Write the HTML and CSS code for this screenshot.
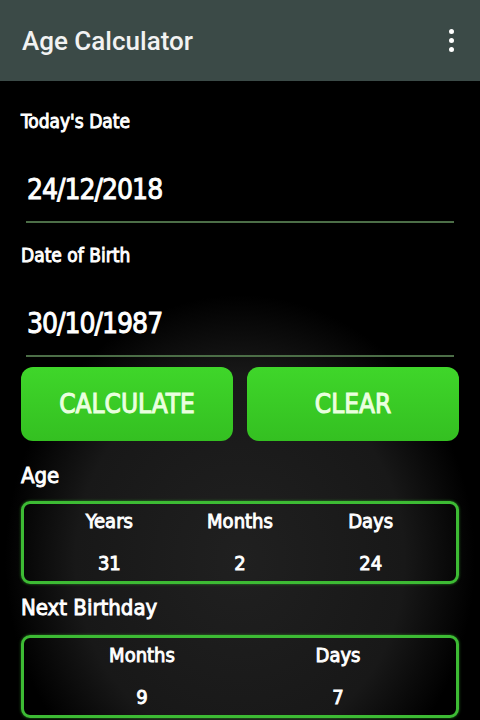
FILE: index.html
```html
<!DOCTYPE html>
<html lang="en">
<head>
  <meta charset="UTF-8" />
  <meta name="viewport" content="width=device-width, initial-scale=1.0" />
  <title>Age Calculator</title>
  <link rel="stylesheet" href="styles.css">
</head>
<body>
  <header class="appbar">
    <h1>Age Calculator</h1>
    <span class="menu-dots"><i></i><i></i><i></i></span>
  </header>

  <main class="content">
    <div class="label first">Today's Date</div>
    <div class="field">24/12/2018</div>

    <div class="label">Date of Birth</div>
    <div class="field">30/10/1987</div>

    <div class="buttons">
      <button type="button">CALCULATE</button>
      <button type="button">CLEAR</button>
    </div>

    <div class="section-title">Age</div>
    <div class="result-box three">
      <span class="head">Years</span>
      <span class="head">Months</span>
      <span class="head">Days</span>
      <span class="val">31</span>
      <span class="val">2</span>
      <span class="val">24</span>
    </div>

    <div class="section-title">Next Birthday</div>
    <div class="result-box two">
      <span class="head">Months</span>
      <span class="head">Days</span>
      <span class="val">9</span>
      <span class="val">7</span>
    </div>
  </main>
</body>
</html>
```

FILE: styles.css
```css
* {
  margin: 0;
  padding: 0;
  box-sizing: border-box;
}

body {
  height: 720px;
  overflow: hidden;
  background: radial-gradient(ellipse 235px 265px at 240px 560px, #202020 0%, #181818 70%, #000 100%) #000;
  color: #fff;
  font-family: "DejaVu Sans Condensed", "DejaVu Sans", sans-serif;
  -webkit-text-stroke: 0.9px #fff;
}

.appbar {
  height: 81px;
  background: #3b4a47;
  display: flex;
  align-items: center;
  justify-content: space-between;
  padding: 0 26px 0 22px;
}

.appbar h1 {
  font-family: Roboto, "Liberation Sans", sans-serif;
  font-weight: 500;
  font-size: 26px;
  color: #f2f2f2;
  -webkit-text-stroke: 0;
}

.menu-dots {
  display: flex;
  flex-direction: column;
  gap: 4px;
}

.menu-dots i {
  width: 5px;
  height: 5px;
  border-radius: 50%;
  background: #fff;
}

.content {
  padding: 28px 21px 0 21px;
}

.label {
  font-size: 19px;
  line-height: 24px;
  margin-top: 20px;
}

.label.first {
  margin-top: 0;
}

.field {
  margin: 40px 5px 0 5px;
  padding-left: 1px;
  font-size: 28px;
  letter-spacing: -1px;
  line-height: 34px;
  padding-bottom: 14px;
  border-bottom: 2px solid #4c6e47;
}

.buttons {
  display: flex;
  gap: 14px;
  margin-top: 10px;
}

.buttons button {
  flex: 1;
  height: 74px;
  border: none;
  border-radius: 12px;
  background: linear-gradient(#3fd62a, #34c021);
  color: #eaffdf;
  font-family: inherit;
  font-size: 26px;
  -webkit-text-stroke: 1px #eaffdf;
}

.section-title {
  font-size: 22px;
  line-height: 28px;
  margin-top: 21px;
}

.result-box {
  display: grid;
  margin-top: 11px;
  border: 3px solid #3dbb34;
  border-radius: 9px;
  box-shadow: 0 0 3px rgba(60, 200, 50, 0.6);
  padding: 4px 20px 5px 20px;
  row-gap: 16px;
  text-align: center;
  font-size: 20px;
  line-height: 26px;
}

.result-box.three {
  grid-template-columns: repeat(3, 1fr);
}

.result-box.two {
  grid-template-columns: repeat(2, 1fr);
}

.result-box + .section-title {
  margin-top: 10px;
}

.section-title + .result-box.two {
  margin-top: 13px;
}
```
